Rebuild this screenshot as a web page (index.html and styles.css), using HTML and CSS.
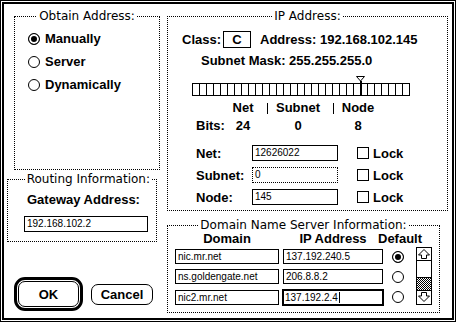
FILE: index.html
```html
<!DOCTYPE html>
<html lang="en">
<head>
    <meta charset="UTF-8">
    <title>MacTCP</title>
    <link rel="stylesheet" href="styles.css">
</head>
<body>

    <div class="window">
        <div class="frame">
            <div class="content">

                <div class="col-left">
                    <section class="group obtain">
                        <h2 class="group-title">Obtain Address:</h2>
                        <div class="radios">
                            <div class="radio-row"><span class="radio on"></span>Manually</div>
                            <div class="radio-row"><span class="radio"></span>Server</div>
                            <div class="radio-row"><span class="radio"></span>Dynamically</div>
                        </div>
                    </section>

                    <section class="group routing">
                        <h2 class="group-title">Routing Information:</h2>
                        <div class="gw-label">Gateway Address:</div>
                        <div class="field gw-field">192.168.102.2</div>
                    </section>

                    <div class="buttons">
                        <div class="default-ring"><div class="btn">OK</div></div>
                        <div class="btn cancel">Cancel</div>
                    </div>
                </div>

                <div class="col-right">
                    <section class="group ip">
                        <h2 class="group-title">IP Address:</h2>

                        <div class="class-row">
                            <span class="class-label">Class:</span>
                            <span class="class-box">C</span>
                            <span class="address">Address: 192.168.102.145</span>
                        </div>

                        <div class="mask-row">Subnet Mask: 255.255.255.0</div>

                        <div class="slider">
                            <div class="track"></div>
                            <!-- thumb sits on the bit boundary 24 -->
                            <svg class="thumb" width="10" height="19" viewBox="0 0 10 19">
                                <polygon points="0.5,0.5 8.5,0.5 4.5,5" fill="#fff" stroke="#000" stroke-width="1"/>
                                <rect x="4" y="5" width="2" height="14" fill="#000"/>
                            </svg>
                        </div>

                        <div class="bits">
                            <span></span><span>Net</span><span class="sep"></span><span>Subnet</span><span class="sep"></span><span>Node</span>
                            <span class="bits-label">Bits:</span><span>24</span><span></span><span>0</span><span></span><span>8</span>
                        </div>

                        <div class="nets">
                            <span class="net-label">Net:</span>
                            <div class="field">12626022</div>
                            <div class="lock"><span class="check"></span>Lock</div>

                            <span class="net-label">Subnet:</span>
                            <div class="field dotted">0</div>
                            <div class="lock"><span class="check"></span>Lock</div>

                            <span class="net-label">Node:</span>
                            <div class="field">145</div>
                            <div class="lock"><span class="check"></span>Lock</div>
                        </div>
                    </section>

                    <section class="group dns">
                        <h2 class="group-title">Domain Name Server Information:</h2>

                        <div class="dns-head">
                            <span>Domain</span>
                            <span>IP Address</span>
                            <span class="default-head">Default</span>
                        </div>

                        <div class="dns-body">
                            <div class="dns-rows">
                                <div class="field">nic.mr.net</div>
                                <div class="field">137.192.240.5</div>
                                <span class="radio on"></span>

                                <div class="field">ns.goldengate.net</div>
                                <div class="field">206.8.8.2</div>
                                <span class="radio"></span>

                                <div class="field">nic2.mr.net</div>
                                <div class="field active">137.192.2.4<span class="caret"></span></div>
                                <span class="radio"></span>
                            </div>

                            <div class="scroll">
                                <div class="arrow">
                                    <svg width="14" height="12" viewBox="0 0 14 12">
                                        <polygon points="7,1.5 12.5,7 9.5,7 9.5,10.5 4.5,10.5 4.5,7 1.5,7" fill="#fff" stroke="#000"/>
                                    </svg>
                                </div>
                                <div class="scroll-thumb"></div>
                                <div class="scroll-gray"></div>
                                <div class="arrow down">
                                    <svg width="14" height="12" viewBox="0 0 14 12">
                                        <polygon points="7,10.5 12.5,5 9.5,5 9.5,1.5 4.5,1.5 4.5,5 1.5,5" fill="#fff" stroke="#000"/>
                                    </svg>
                                </div>
                            </div>
                        </div>
                    </section>
                </div>

            </div>
        </div>
    </div>

</body>
</html>
```

FILE: styles.css
```css
* {
    margin: 0;
    padding: 0;
    box-sizing: border-box;
}

body {
    width: 456px;
    height: 322px;
    background-color: #fff;
    color: #000;
    font-family: "Liberation Sans", Arial, sans-serif;
    font-size: 13px;
    font-weight: bold;
}

/* dialog frame: thin line, white gap, thick line */
.window {
    width: 456px;
    height: 322px;
    border: 1px solid #000;
    padding: 1px;
}

.frame {
    height: 100%;
    border: 2px solid #000;
}

.content {
    display: flex;
    gap: 7px;
    padding: 12px 0 0 3px;
}

.col-left {
    width: 153px;
    display: flex;
    flex-direction: column;
}

.col-right {
    width: 281px;
    display: flex;
    flex-direction: column;
}

/* dotted group boxes */
.group {
    display: flex;
    flex-direction: column;
    border: 1px dotted #000;
}

.group-title {
    align-self: center;
    margin-top: -8px;
    padding: 0 2px;
    background-color: #fff;
    font-family: "DejaVu Sans", sans-serif;
    font-size: 12px;
    font-weight: normal;
    line-height: 14px;
    white-space: nowrap;
}

.field {
    height: 16px;
    border: 1px solid #000;
    padding-left: 2px;
    font-family: "Liberation Sans", Arial, sans-serif;
    font-size: 10px;
    font-weight: normal;
    line-height: 14px;
    white-space: nowrap;
    overflow: hidden;
}

.field.dotted {
    border-style: dotted;
}

.radio {
    flex: none;
    width: 12px;
    height: 12px;
    border: 1px solid #000;
    border-radius: 50%;
}

.radio.on {
    background-color: #000;
    box-shadow: inset 0 0 0 2px #fff;
}

/* obtain address */
.obtain {
    margin-left: 7px;
    width: 146px;
    height: 154px;
}

.radios {
    display: flex;
    flex-direction: column;
    padding: 4px 0 0 13px;
}

.radio-row {
    display: flex;
    align-items: center;
    gap: 5px;
    height: 23px;
}

/* routing */
.routing {
    margin-top: 9px;
    width: 150px;
    height: 63px;
}

.routing .group-title {
    align-self: flex-end;
    margin-right: 4px;
}

.gw-label {
    margin: 6px 0 0 19px;
    line-height: 16px;
}

.gw-field {
    margin: 8px 0 0 16px;
    width: 124px;
}

/* buttons */
.buttons {
    display: flex;
    align-items: center;
    margin-top: 35px;
}

.default-ring {
    margin-left: 7px;
    width: 69px;
    height: 34px;
    border: 3px solid #000;
    border-radius: 11px;
    padding: 1px;
}

.btn {
    display: flex;
    align-items: center;
    justify-content: center;
    width: 100%;
    height: 100%;
    border: 1px solid #000;
    border-radius: 7px;
    background-color: #fff;
}

.btn.cancel {
    width: 62px;
    height: 21px;
    margin-left: 8px;
}

/* ip address */
.ip {
    width: 281px;
    height: 195px;
}

.class-row {
    display: flex;
    align-items: center;
    height: 17px;
    margin: 8px 0 0 14px;
}

.class-label {
    width: 41px;
}

.class-box {
    display: flex;
    align-items: center;
    justify-content: center;
    width: 28px;
    height: 17px;
    border: 1px solid #000;
}

.address {
    margin-left: 9px;
}

.mask-row {
    margin: 5px 0 0 33px;
    line-height: 16px;
}

.slider {
    position: relative;
    width: 218px;
    margin: 0 0 0 24px;
    padding-top: 14px;
}

.track {
    height: 13px;
    border-top: 1px solid #000;
    border-bottom: 1px solid #000;
    background: repeating-linear-gradient(to right, #000 0 1px, transparent 1px 7px);
}

.thumb {
    position: absolute;
    left: 164px;
    top: 7px;
}

.bits {
    display: grid;
    grid-template-columns: 30px 34px 14px 48px 22px 28px;
    justify-items: center;
    align-items: center;
    row-gap: 2px;
    margin: 4px 0 0 28px;
    line-height: 16px;
    white-space: nowrap;
}

.bits .sep {
    width: 1px;
    height: 11px;
    background-color: #000;
}

.bits .bits-label {
    justify-self: start;
}

.nets {
    display: grid;
    grid-template-columns: 56px 86px auto;
    align-items: center;
    row-gap: 6px;
    margin: 11px 0 0 28px;
}

.lock {
    display: flex;
    align-items: center;
    gap: 4px;
    margin-left: 19px;
}

.check {
    width: 12px;
    height: 12px;
    border: 1px solid #000;
}

/* dns */
.dns {
    margin-top: 14px;
    width: 273px;
    height: 88px;
}

.dns-head {
    display: grid;
    grid-template-columns: 104px 100px 28px;
    column-gap: 4px;
    justify-items: center;
    padding-left: 7px;
    line-height: 13px;
    white-space: nowrap;
}

.dns-head .default-head {
    justify-self: start;
    margin-left: -9px;
}

.dns-body {
    display: flex;
    margin-top: 2px;
}

.dns-rows {
    display: grid;
    grid-template-columns: 104px 100px 28px;
    column-gap: 4px;
    row-gap: 5px;
    align-items: center;
    padding: 2px 0 0 7px;
}

.dns-rows .field {
    height: 15px;
    line-height: 13px;
}

.dns-rows .field.active {
    height: 17px;
    margin: -1px;
    border-width: 2px;
    padding-left: 1px;
}

.caret {
    display: inline-block;
    width: 1px;
    height: 11px;
    margin-left: 1px;
    vertical-align: -2px;
    background-color: #000;
}

.dns-rows .radio {
    justify-self: start;
    margin-left: 5px;
}

.scroll {
    display: flex;
    flex-direction: column;
    width: 16px;
    height: 58px;
    margin-left: 1px;
    border: 1px solid #000;
}

.arrow {
    display: flex;
    justify-content: center;
    height: 13px;
    border-bottom: 1px solid #000;
}

.arrow.down {
    height: 14px;
    border-bottom: none;
    border-top: 1px solid #000;
}

.scroll-thumb {
    height: 17px;
    border-bottom: 1px solid #000;
}

.scroll-gray {
    flex: 1;
    background: repeating-conic-gradient(#000 0 25%, #fff 0 50%) 0 0 / 2px 2px;
}
```
